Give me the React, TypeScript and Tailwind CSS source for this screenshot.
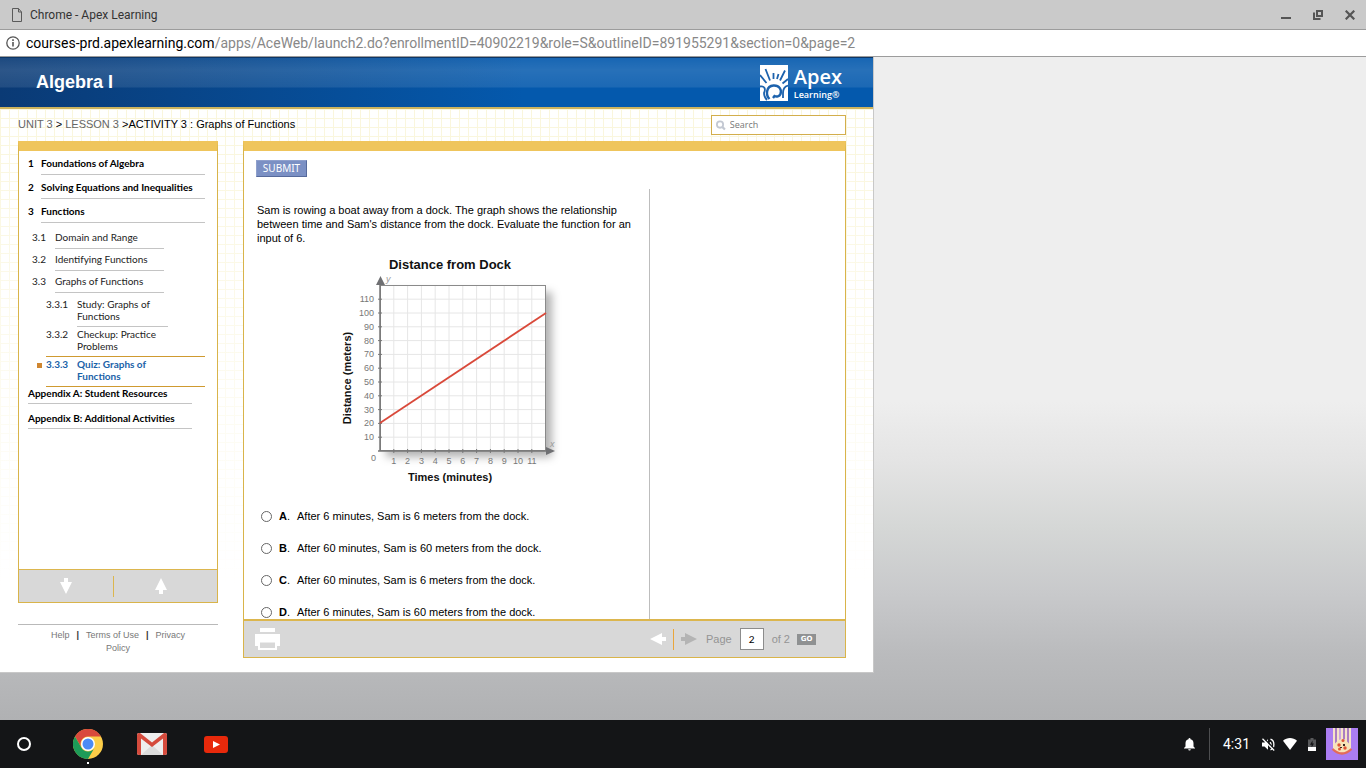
import type { ReactNode } from "react";
import clsx from "clsx";

const lessons = [
  { num: "3.1", title: "Domain and Range" },
  { num: "3.2", title: "Identifying Functions" },
  { num: "3.3", title: "Graphs of Functions" },
];

const units = [
  { num: "1", title: "Foundations of Algebra" },
  { num: "2", title: "Solving Equations and Inequalities" },
  { num: "3", title: "Functions" },
];

const activities = [
  { num: "3.3.1", title: "Study: Graphs of Functions" },
  { num: "3.3.2", title: "Checkup: Practice Problems" },
  { num: "3.3.3", title: "Quiz: Graphs of Functions", current: true },
];

const answers = [
  { id: "A", text: "After 6 minutes, Sam is 6 meters from the dock." },
  { id: "B", text: "After 60 minutes, Sam is 60 meters from the dock." },
  { id: "C", text: "After 60 minutes, Sam is 6 meters from the dock." },
  { id: "D", text: "After 6 minutes, Sam is 60 meters from the dock." },
];

function TitleBar() {
  return (
    <div className="flex h-[30px] shrink-0 items-center border-b border-[#9c9c9c] bg-[#cacaca] pr-[11px] pl-3 font-[Roboto,sans-serif]">
      <svg width="10" height="14" viewBox="0 0 10 14" fill="none" stroke="#5a5a5a">
        <path d="M.5.5h6l3 3.5v9.500h-9z" />
        <path d="M6.500.5V4h3" />
      </svg>
      <h1 className="ml-2 text-[12px] text-[#333]">Chrome - Apex Learning</h1>
      <div className="ml-auto flex items-center gap-[22px] text-[#555]">
        <button aria-label="Minimize">
          <svg width="10" height="10" viewBox="0 0 10 10">
            <path d="M0 7h10v2H0z" fill="currentColor" />
          </svg>
        </button>
        <button aria-label="Restore">
          <svg width="10" height="10" viewBox="0 0 10 10" fill="none" stroke="currentColor" strokeWidth="2">
            <path d="M4 1h5v5H4z" />
            <path d="M1 2.500V9h6.500" />
          </svg>
        </button>
        <button aria-label="Close">
          <svg width="10" height="10" viewBox="0 0 10 10" fill="none" stroke="currentColor" strokeWidth="2.200">
            <path d="M.7.7l8.600 8.600M9.300.7L.7 9.300" />
          </svg>
        </button>
      </div>
    </div>
  );
}

function AddressBar() {
  return (
    <div className="flex h-[27px] shrink-0 items-center border-b border-[#9c9c9c] bg-white pl-[6px] font-[Roboto,sans-serif]">
      <svg width="14" height="14" viewBox="0 0 14 14" fill="none" stroke="#555">
        <circle cx="7" cy="7" r="6.200" strokeWidth="1.300" />
        <path d="M7 6v4.500M7 3.300v1.700" strokeWidth="1.600" />
      </svg>
      <p className="ml-[6px] text-[14px] text-[#888]">
        <span className="text-black">courses-prd.apexlearning.com</span>
        /apps/AceWeb/launch2.do?enrollmentID=40902219&amp;role=S&amp;outlineID=891955291&amp;section=0&amp;page=2
      </p>
    </div>
  );
}

function ApexLogo() {
  return (
    <div className="flex items-center gap-[6px] text-white">
      <svg width="28" height="36" viewBox="0 0 28 36">
        <path d="M0 0h28v36H0z" fill="white" />
        <g fill="none" stroke="#1c62ad">
          <path d="M5.500 4l4.500 11.500M0 10l6.500 8M13.500 8v6M18.500 9l-1.500 5M25 5.500l-5 10M28 14l-5.500 4.500" strokeWidth="1.800" />
          <path d="M0 21.500q3.500-.5 4.500 1.500t-.5 5q0 4 3 7" strokeWidth="1.800" />
          <path d="M9.500 34c-4-4-3.500-13 4-13.500 6-.3 8.500 4.500 7 8.500-1 2.500-4 3-6 2l-1.500 2" strokeWidth="2.400" />
          <path d="M28 20.500c-4 1-5 3.500-5 7.500v5" strokeWidth="1.800" />
        </g>
      </svg>
      <div className="font-['Open_Sans',sans-serif] font-semibold">
        <p className="text-[20px] leading-[24px]">Apex</p>
        <p className="text-[9px] leading-[12px]">Learning®</p>
      </div>
    </div>
  );
}

function Arrow({ className }: { className?: string }) {
  return (
    <svg className={className} width="16" height="12" viewBox="0 0 16 12" fill="currentColor">
      <path d="M0 6l12-6v4h4v4h-4v4z" />
    </svg>
  );
}

function Band({ children }: { children: ReactNode }) {
  return (
    <section className="flex min-h-0 flex-1 flex-col border border-t-[10px] border-[#d9b44a] border-t-[#efc55c] bg-white">
      {children}
    </section>
  );
}

function Outline() {
  return (
    <nav className="min-h-0 flex-1 overflow-hidden pr-3 text-[10px] leading-[14px] text-[#222]">
      <ul className="pl-[9px] font-bold text-black">
        {units.map((u) => (
          <li key={u.num} className="flex h-6">
            <span className="w-[13px] pt-[5px]">{u.num}</span>
            <a href="#" className="flex-1 border-b border-[#c4c4c4] pt-[5px] whitespace-nowrap">
              {u.title}
            </a>
          </li>
        ))}
      </ul>
      <ul className="mt-1 pl-[13px]">
        {lessons.map((l) => (
          <li key={l.num} className="flex h-[22px]">
            <span className="w-[23px] pt-[3px]">{l.num}</span>
            <a href="#" className="w-[109px] border-b border-[#c4c4c4] pt-[3px]">
              {l.title}
            </a>
          </li>
        ))}
      </ul>
      <ul className="mt-1 pl-[27px] leading-[12px]">
        {activities.map((a, i) => (
          <li
            key={a.num}
            className={clsx(
              "relative flex h-[30px]",
              i > 0 && "border-b border-[#cf9a30]",
              a.current && "font-bold text-[#1a62a8]"
            )}
          >
            {a.current && <span className="absolute top-[6px] -left-[9px] size-[5px] bg-[#cf8630]" />}
            <span className="w-[31px] pt-px">{a.num}</span>
            <a href="#" className={clsx("w-[91px] pt-px", i === 0 && "border-b border-[#c4c4c4]")}>
              {a.title}
            </a>
          </li>
        ))}
      </ul>
      <ul className="space-y-2 pl-[9px] leading-[12px] font-bold text-black">
        {["Appendix A: Student Resources", "Appendix B: Additional Activities"].map((t) => (
          <li key={t} className="w-[173px] pr-[9px]">
            <a href="#" className="block border-b border-[#c4c4c4] pb-1">
              {t}
            </a>
          </li>
        ))}
      </ul>
    </nav>
  );
}

function Sidebar() {
  return (
    <aside className="flex w-[200px] shrink-0 flex-col font-[Lato,sans-serif]">
      <Band>
        <Outline />
        <div className="flex h-[33px] shrink-0 items-center border-t border-[#dcb64e] bg-[#d8d8d8] pr-[9px] text-white">
          <button aria-label="Scroll down" className="flex flex-1 justify-center">
            <Arrow className="-rotate-90" />
          </button>
          <span className="h-[21px] w-px bg-[#dcb64e]" />
          <button aria-label="Scroll up" className="flex flex-1 justify-center">
            <Arrow className="rotate-90" />
          </button>
        </div>
      </Band>
      <footer className="mt-[21px] mb-[17px] flex flex-wrap justify-center border-t border-[#b9b9b9] px-5 pt-1 font-['Liberation_Sans',Arial,sans-serif] text-[9px] leading-[13px] text-[#777]">
        <a href="#">Help</a>
        <span className="px-[7px] font-bold text-[#333]">|</span>
        <a href="#">Terms of Use</a>
        <span className="px-[7px] font-bold text-[#333]">|</span>
        <a href="#" className="contents">
          <span>Privacy</span>
          <span className="basis-full text-center">Policy</span>
        </a>
      </footer>
    </aside>
  );
}

const steps = Array.from({ length: 11 }, (_, i) => i + 1);
const STEP = 13.8;

function DistanceChart() {
  return (
    <svg
      className="mt-[5px] mb-[10px] ml-[73px] font-['Liberation_Sans',Arial,sans-serif]"
      width="250"
      height="240"
      viewBox="0 0 250 240"
      role="img"
      aria-label="Distance from Dock"
    >
      <defs>
        <filter id="drop" x="-10%" y="-10%" width="130%" height="130%">
          <feDropShadow dx="6" dy="6" stdDeviation="4" floodColor="#000" floodOpacity="0.3" />
        </filter>
      </defs>
      <rect x="50" y="36" width="166" height="165" fill="white" filter="url(#drop)" />
      <g stroke="#e6e6e6">
        {steps.map((n) => (
          <g key={n}>
            <path d={`M${50 + n * STEP} 36V201`} />
            <path d={`M50 ${201 - n * STEP}H216`} />
          </g>
        ))}
      </g>
      <rect x="50.500" y="35.500" width="165" height="165" fill="none" stroke="#8a8a8a" />
      <path d="M50 32V201.500M48 201H218" stroke="#777" strokeWidth="1.500" />
      <g stroke="#777">
        {steps.map((n) => (
          <g key={n}>
            <path d={`M${50 + n * STEP} 199v4`} />
            <path d={`M48 ${201 - n * STEP}h4`} />
          </g>
        ))}
      </g>
      <path d="M46 35l4.500-9 4.500 9zM216 197l9 4-9 4z" fill="#6f7073" />
      <path d="M50 173L216 63" stroke="#d9493a" strokeWidth="1.800" />
      <g fontSize="9" fill="#777">
        {steps.map((n) => (
          <g key={n}>
            <text x="44" y={204 - n * STEP} textAnchor="end">
              {n * 10}
            </text>
            <text x={50 + n * STEP} y="214" textAnchor="middle">
              {n}
            </text>
          </g>
        ))}
        <text x="41" y="211">0</text>
        <text x="56" y="32" fontStyle="italic" fill="#999">y</text>
        <text x="220" y="197" fontStyle="italic" fill="#999">x</text>
      </g>
      <g fontWeight="bold" fill="#111" textAnchor="middle">
        <text x="120" y="19" fontSize="13">Distance from Dock</text>
        <text x="120" y="231" fontSize="11">Times (minutes)</text>
        <text x="-128" y="21" fontSize="11" transform="rotate(-90)">Distance (meters)</text>
      </g>
    </svg>
  );
}

function Question() {
  return (
    <form className="w-[406px] shrink-0 overflow-hidden border-r border-[#bdbdbd] pt-[14px] pr-4 pl-[13px] text-[11px] leading-[14px] text-black">
      <p>
        Sam is rowing a boat away from a dock. The graph shows the relationship between time and
        Sam's distance from the dock. Evaluate the function for an input of 6.
      </p>
      <DistanceChart />
      {answers.map((a) => (
        <label key={a.id} className="flex h-8 items-center pl-1">
          <input
            type="radio"
            name="answer"
            value={a.id}
            className="size-[11px] appearance-none rounded-full border border-[#666] bg-white checked:border-4"
          />
          <span className="ml-[7px] w-[18px]">
            <b>{a.id}</b>.
          </span>
          {a.text}
        </label>
      ))}
    </form>
  );
}

function Pager() {
  return (
    <div className="flex h-[38px] shrink-0 items-center border-t-2 border-[#dcb64e] bg-[#d8d8d8] pr-[29px] pl-[10px] text-[11px] text-[#949494]">
      <button aria-label="Print" className="text-white">
        <svg width="27" height="24" viewBox="0 0 27 24" fill="currentColor">
          <path d="M6 1h15v4H6z" />
          <path fillRule="evenodd" d="M1 7h25v12h-3v4H4v-4H1zM6 15.500h15V21H6z" />
        </svg>
      </button>
      <button aria-label="Previous page" className="ml-auto text-white">
        <Arrow />
      </button>
      <span className="mx-[7px] h-[21px] w-px bg-[#eaa63c]" />
      <button aria-label="Next page" className="text-[#b4b4b4]">
        <Arrow className="rotate-180" />
      </button>
      <label htmlFor="page" className="ml-[9px]">Page</label>
      <input
        id="page"
        defaultValue="2"
        className="mx-2 h-[22px] w-6 border border-[#8c8c8c] bg-white text-center font-[Lato,sans-serif] text-[10px] text-black"
      />
      <span>of 2</span>
      <button className="ml-[7px] h-[11px] w-[19px] bg-[#8f9192] text-center font-['DejaVu_Sans',sans-serif] text-[7px] leading-[11px] font-bold text-white">
        GO
      </button>
    </div>
  );
}

function Course() {
  return (
    <div className="flex min-h-0 w-full max-w-[874px] flex-1 flex-col border-r border-b border-[#c8c8c8] bg-white font-['Liberation_Sans',Arial,sans-serif]">
      <header className="flex h-[52px] shrink-0 items-center justify-between border-t border-b-2 border-t-[#0d3666] border-b-[#cdb45e] bg-[linear-gradient(to_bottom,#ffffff14_0,#ffffff24_12px,#ffffff18_29px,transparent_30px),linear-gradient(to_right,#0a3a75,#0459ad_60%,#0459ad)] pr-[31px] pl-9">
        <h2 className="text-[18px] font-bold text-white">Algebra I</h2>
        <ApexLogo />
      </header>
      <div className="flex min-h-0 flex-1 flex-col bg-[linear-gradient(to_bottom,transparent,white_85%),linear-gradient(to_right,#faf6dc_1px,transparent_1px),linear-gradient(to_bottom,#faf6dc_1px,transparent_1px)] bg-size-[100%_100%,9px_9px,9px_9px] pr-[27px] pl-[18px]">
        <div className="flex h-8 shrink-0 items-center justify-between">
          <p className="pb-[2px] text-[11px] text-black">
            <a href="#" className="text-[#666]">UNIT 3</a> &gt;{" "}
            <a href="#" className="text-[#666]">LESSON 3</a> &gt;ACTIVITY 3 : Graphs of Functions
          </p>
          <label className="flex h-5 w-[135px] items-center border border-[#d3ae4c] bg-white pl-1">
            <svg width="11" height="11" viewBox="0 0 11 11" fill="none" stroke="#c3c8d2">
              <circle cx="4.500" cy="4.500" r="3.500" strokeWidth="2" />
              <path d="M7 7l3 3" strokeWidth="2.500" />
            </svg>
            <input
              aria-label="Search"
              placeholder="Search"
              className="ml-[4px] w-full min-w-0 font-['Open_Sans',sans-serif] text-[9px] placeholder:text-[#777]"
            />
          </label>
        </div>
        <div className="flex min-h-0 flex-1 gap-[25px]">
          <Sidebar />
          <main className="flex min-w-0 flex-1 flex-col pb-[14px]">
            <Band>
              <div className="h-[38px] shrink-0 pt-[9px] pl-3">
                <button className="block h-[17px] w-[51px] border border-[#8fa0cc] border-r-[#566a9c] border-b-[#566a9c] bg-[#7b90c4] text-center font-['Noto_Sans',sans-serif] text-[10px] leading-[15px] text-white">
                  SUBMIT
                </button>
              </div>
              <div className="flex min-h-0 flex-1">
                <Question />
              </div>
              <Pager />
            </Band>
          </main>
        </div>
      </div>
    </div>
  );
}

function ChromeIcon() {
  return (
    <svg width="30" height="30" viewBox="0 0 30 30">
      <circle cx="15" cy="15" r="15" fill="#fccd48" />
      <path d="M2 7.500A15 15 0 0 1 28 7.500H15a7.500 7.500 0 0 0-6.500 11.200z" fill="#d9493c" />
      <path d="M2 7.500A15 15 0 0 0 15 30l6.500-11.300a7.500 7.500 0 0 1-13 0z" fill="#1d9b58" />
      <circle cx="15" cy="15" r="7" fill="white" />
      <circle cx="15" cy="15" r="5.500" fill="#4c8bf5" />
    </svg>
  );
}

function GmailIcon() {
  return (
    <svg width="30" height="22" viewBox="0 0 30 22">
      <rect width="30" height="22" rx="2" fill="#eeeeee" />
      <path d="M4 22l11-10 11 10z" fill="#dcdcdc" />
      <path d="M0 2q0-2 2-2h1l12 9.500L27 0h1q2 0 2 2v18q0 2-2 2h-2V5.500L15 14 4 5.500V22H2q-2 0-2-2z" fill="#d54b3d" />
    </svg>
  );
}

function Shelf() {
  return (
    <footer className="flex h-12 shrink-0 items-center justify-between bg-[#141517] px-2 font-[Roboto,sans-serif] text-white">
      <div className="flex items-center">
        <button aria-label="Launcher" className="flex w-8 justify-center">
          <svg width="14" height="14" viewBox="0 0 14 14">
            <circle cx="7" cy="7" r="6" fill="none" stroke="white" strokeWidth="2" />
          </svg>
        </button>
        <button aria-label="Chrome" className="relative flex w-24 justify-center">
          <ChromeIcon />
          <span className="absolute -bottom-[5px] size-[2px] bg-white" />
        </button>
        <button aria-label="Gmail" className="flex w-8 justify-center">
          <GmailIcon />
        </button>
        <button aria-label="YouTube" className="flex w-24 justify-center">
          <svg width="24" height="17" viewBox="0 0 24 17">
            <rect width="24" height="17" rx="3" fill="#e8290b" />
            <path d="M9 5l7 3.500L9 12z" fill="white" />
          </svg>
        </button>
      </div>
      <div className="flex items-center">
        <svg width="11" height="13" viewBox="0 0 11 13" fill="white">
          <path d="M0 10.500V10l1.500-1.500V5.200C1.500 3.200 2.600 1.700 4.500 1.300V1a1 1 0 0 1 2 0v.3c1.900.4 3 1.900 3 3.900v3.300L11 10v.5zM4.200 11.200h2.600a1.300 1.300 0 0 1-2.600 0z" />
        </svg>
        <span className="ml-[14px] h-8 w-px bg-[#4d4e50]" />
        <time className="ml-[13px] text-[14px]">4:31</time>
        <svg className="ml-3" width="13" height="13" viewBox="0 0 13 13">
          <path d="M0 4.500h2.500L6 1.200v10.600L2.500 8.500H0z" fill="white" />
          <path d="M8 4.200q2 2.300 0 4.600M8.500 1.200c4.500 1.500 4.500 9.100 0 10.600" fill="none" stroke="white" strokeWidth="1.300" />
          <path d="M1.500 0L13 11.500" stroke="#141517" strokeWidth="1.500" />
          <path d="M.5.8l11.700 11.700" stroke="white" strokeWidth="1.300" />
        </svg>
        <svg className="ml-2" width="14" height="12" viewBox="0 0 14 12">
          <path d="M7 12L0 2.800C4-.9 10-.9 14 2.800z" fill="white" />
        </svg>
        <svg className="ml-[11px]" width="8" height="13" viewBox="0 0 8 13">
          <path d="M2.500 0h3v1.500H8V9H0V1.500h2.500z" fill="#58595b" />
          <path d="M4.500 2.500L2 6.800h1.600v2.600L6 5.500H4.500z" fill="#141517" />
          <path d="M0 9h8v4H0z" fill="white" />
        </svg>
        <svg className="ml-[10px]" width="32" height="32" viewBox="0 0 32 32">
          <path d="M0 0h32v32H0z" fill="#ab7df2" />
          <path d="M7 0h18v22q-9 7-18 0z" fill="#cba4df" />
          <path d="M8 0v20M12 0v14M16 0v11M20 0v14M24 0v20" stroke="#f6e3c8" strokeWidth="2" />
          <path d="M10 0v15M18 0v11M22 0v15" stroke="#8b56a6" />
          <path d="M8 17q4-6 8-6t8 6l1 5q-9 6-18 0z" fill="#f7e4b8" />
          <path d="M6.500 21q9.500 9 19 0" fill="none" stroke="#e46b58" strokeWidth="2.200" />
          <g fill="#df5536">
            <circle cx="13" cy="17" r="1.700" />
            <circle cx="19" cy="20" r="1.700" />
            <circle cx="17" cy="12.500" r="1.500" />
            <circle cx="13.500" cy="21" r="1.500" />
          </g>
          <path d="M17 16h2v2h-2zM14 19h2v1h-2z" fill="#3b2b25" />
        </svg>
      </div>
    </footer>
  );
}

export default function App() {
  return (
    <div className="flex h-screen flex-col overflow-hidden">
      <TitleBar />
      <AddressBar />
      <div className="flex min-h-0 flex-1 flex-col bg-[linear-gradient(to_bottom,#eeeeee_52%,#e4e4e4_61%,#d5d7d6_71%,#c8c9cb_81%,#babbbd_90%,#b0b1b3)] pb-[47px]">
        <Course />
      </div>
      <Shelf />
    </div>
  );
}
